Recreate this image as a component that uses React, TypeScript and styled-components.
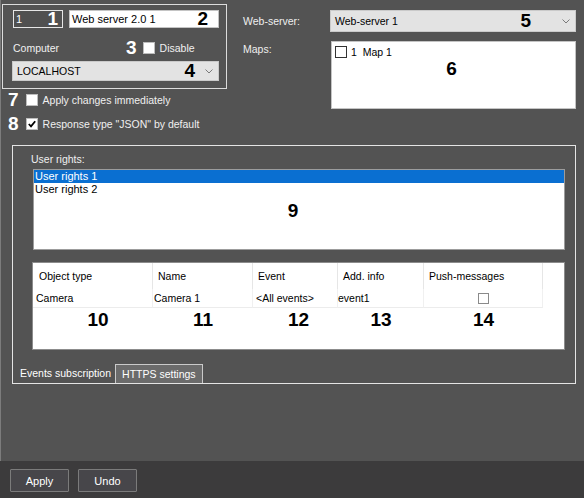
import styled, { createGlobalStyle } from "styled-components";

const GlobalStyle = createGlobalStyle`
  html, body { margin: 0; padding: 0; background: #535353; }
  body { font-family: "Liberation Sans", Arial, sans-serif; font-size: 10.5px; }
  * { box-sizing: border-box; }
`;

const Window = styled.div`
  width: 584px;
  height: 498px;
  display: flex;
  flex-direction: column;
  background: #535353;
  color: #f2f2f2;
  overflow: hidden;
`;

const Main = styled.div`
  height: 461px;
  border-left: 1px solid #7c7c7c;
`;

const Top = styled.div`
  display: flex;
  align-items: flex-start;
`;

const LeftCol = styled.div`
  padding-top: 4px;
  margin-left: 1px;
  width: 225px;
`;

const GroupBox = styled.div`
  width: 225px;
  height: 85px;
  border: 1px solid #dcdcdc;
  padding: 5px 6px 7px 10px;
`;

const FieldRow = styled.div`
  display: flex;
  gap: 6px;
  height: 18px;
`;

const Field = styled.div<{ $dark?: boolean; $w: number; $right: number }>`
  width: ${(p) => p.$w}px;
  height: 18px;
  display: flex;
  align-items: center;
  padding: 0 ${(p) => p.$right}px 0 2px;
  border: 1px solid ${(p) => (p.$dark ? "#e6e6e6" : "#c4c4c4")};
  background: ${(p) => (p.$dark ? "#505050" : "#ffffff")};
  color: ${(p) => (p.$dark ? "#ffffff" : "#000000")};
  font-size: 11px;
`;

const Value = styled.span`
  flex: 1;
  white-space: nowrap;
`;

const Mark = styled.span<{ $dark?: boolean }>`
  font-family: "Liberation Sans", Arial, sans-serif;
  font-weight: bold;
  font-size: 19px;
  line-height: 16px;
  color: ${(p) => (p.$dark ? "#000000" : "#ffffff")};
`;

const InlineRow = styled.div<{ $top: number }>`
  display: flex;
  align-items: center;
  height: 14px;
  margin-top: ${(p) => p.$top}px;
`;

const Label = styled.span<{ $w?: number }>`
  ${(p) => (p.$w ? `width: ${p.$w}px;` : "")}
  white-space: nowrap;
  color: #f0f0f0;
  font-size: 10.5px;
`;

const Box = styled.span<{ $tone?: string; $size?: number }>`
  width: ${(p) => p.$size ?? 12}px;
  height: ${(p) => p.$size ?? 12}px;
  flex: none;
  display: inline-flex;
  align-items: center;
  justify-content: center;
  background: #ffffff;
  border: 1px solid ${(p) => p.$tone ?? "#bdbdbd"};
`;

const Combo = styled.div<{ $w: number; $h: number }>`
  width: ${(p) => p.$w}px;
  height: ${(p) => p.$h}px;
  display: flex;
  align-items: center;
  background: #e3e3e3;
  border: 1px solid #cacaca;
  color: #000;
  padding: 0 5px 0 4px;
  font-size: 10.5px;
`;

const ComboPlace = styled.div`
  margin: 6px 0 0 -1px;
`;

const CheckRows = styled.div`
  padding-left: 6px;
`;

const Gap = styled.span<{ $w: number }>`
  width: ${(p) => p.$w}px;
  flex: none;
`;

const RightCol = styled.div`
  margin-left: 16px;
  padding-top: 10px;
  display: grid;
  grid-template-columns: 87px 246px;
  align-content: start;
  row-gap: 9px;
`;

const FormLabel = styled.div<{ $top?: boolean }>`
  display: flex;
  align-items: ${(p) => (p.$top ? "flex-start" : "center")};
  padding-top: ${(p) => (p.$top ? 2 : 0)}px;
  color: #efefef;
  font-size: 10.5px;
`;

const MapsBox = styled.div`
  height: 68px;
  margin-left: 1px;
  background: #ffffff;
  border: 1px solid #c4c4c4;
  padding: 4px 3px;
  color: #000;
`;

const MapItem = styled.div`
  display: flex;
  align-items: center;
  gap: 4px;
  font-size: 10.5px;
`;

const Centered = styled.div<{ $top: number; $shift?: number }>`
  text-align: center;
  margin-top: ${(p) => p.$top}px;
  padding-right: ${(p) => p.$shift ?? 0}px;
`;

const Group = styled.div`
  margin: 14px 0 0 11px;
  width: 564px;
  height: 239px;
  border: 1px solid #e4e4e4;
  padding-top: 6px;
`;

const SectionLabel = styled.div`
  padding-left: 18px;
  line-height: 14px;
  font-size: 10.5px;
  color: #f0f0f0;
`;

const ListBox = styled.div`
  margin: 3px 0 0 20px;
  width: 532px;
  height: 81px;
  background: #ffffff;
  border: 1px solid #9c9c9c;
  color: #000;
`;

const ListRow = styled.div<{ $selected?: boolean }>`
  height: 13px;
  line-height: 13px;
  padding-left: 1px;
  font-size: 11px;
  background: ${(p) => (p.$selected ? "#0a6fd1" : "transparent")};
  color: ${(p) => (p.$selected ? "#ffffff" : "#000000")};
`;

const Table = styled.div`
  margin: 12px 0 0 19px;
  width: 533px;
  height: 88px;
  background: #ffffff;
  border: 1px solid #8c8c8c;
  color: #000;
  display: grid;
  grid-template-columns: 120px 100px 85px 86px 119px;
  grid-template-rows: 26px 19px 24px;
  align-content: start;
`;

const Head = styled.div<{ $pad: number }>`
  display: flex;
  align-items: center;
  padding-left: ${(p) => p.$pad}px;
  border-right: 1px solid #e6e6e6;
  font-size: 10.5px;
  white-space: nowrap;
`;

const Cell = styled.div<{ $pad: number; $center?: boolean }>`
  display: flex;
  align-items: center;
  justify-content: ${(p) => (p.$center ? "center" : "flex-start")};
  padding-left: ${(p) => p.$pad}px;
  border-right: 1px solid #f0f0f0;
  border-bottom: 1px solid #ececec;
  font-size: 10.5px;
  white-space: nowrap;
`;

const NumCell = styled.div<{ $shift?: number }>`
  display: flex;
  align-items: center;
  justify-content: center;
  padding-left: ${(p) => p.$shift ?? 0}px;
`;

const Tabs = styled.div`
  margin-top: 14px;
  height: 19px;
  display: flex;
  padding-left: 5px;
`;

const Tab = styled.div<{ $active?: boolean }>`
  height: 19px;
  line-height: 18px;
  padding: 0 ${(p) => (p.$active ? "4px 0 2px" : "6px")};
  font-size: 10.5px;
  color: #ffffff;
  background: ${(p) => (p.$active ? "transparent" : "#6b6b6b")};
  border: ${(p) => (p.$active ? "none" : "1px solid #cacaca")};
  border-bottom: none;
`;

const BottomBar = styled.div`
  height: 37px;
  background: #3c3b3c;
  display: flex;
  gap: 9px;
  padding: 8px 0 0 10px;
`;

const Button = styled.button`
  width: 59px;
  height: 23px;
  background: #47464a;
  border: 1px solid #7b7b7b;
  border-radius: 1px;
  color: #ffffff;
  font-family: "Liberation Sans", Arial, sans-serif;
  font-size: 11px;
  padding: 0;
`;

function Chevron({ gap = 9 }: { gap?: number }) {
  return (
    <svg width="8" height="5" viewBox="0 0 8 5" style={{ marginLeft: gap, flex: "none" }}>
      <polyline points="0.5,0.5 4,4 7.5,0.5" fill="none" stroke="#7a7a7a" strokeWidth="1" />
    </svg>
  );
}

function Check({ checked, tone, size }: { checked?: boolean; tone?: string; size?: number }) {
  return (
    <Box $tone={tone} $size={size}>
      {checked && (
        <svg width="8" height="8" viewBox="0 0 8 8">
          <polyline points="0.8,4 3,6.3 7.2,1.2" fill="none" stroke="#000" strokeWidth="1.8" />
        </svg>
      )}
    </Box>
  );
}

export default function App() {
  return (
    <Window>
      <GlobalStyle />
      <Main>
        <Top>
          <LeftCol>
            <GroupBox>
              <FieldRow>
                <Field $dark $w={50} $right={4}>
                  <Value>1</Value>
                  <Mark>1</Mark>
                </Field>
                <Field $w={150} $right={10}>
                  <Value>Web server 2.0 1</Value>
                  <Mark $dark>2</Mark>
                </Field>
              </FieldRow>
              <InlineRow $top={13}>
                <Label $w={113}>Computer</Label>
                <Mark>3</Mark>
                <Gap $w={6} />
                <Check />
                <Gap $w={5} />
                <Label>Disable</Label>
              </InlineRow>
              <ComboPlace>
                <Combo $w={207} $h={20}>
                  <Value>LOCALHOST</Value>
                  <Mark $dark>4</Mark>
                  <Chevron gap={10} />
                </Combo>
              </ComboPlace>
            </GroupBox>
            <CheckRows>
              <InlineRow $top={4}>
                <Mark>7</Mark>
                <Gap $w={7} />
                <Check />
                <Gap $w={5} />
                <Label>Apply changes immediately</Label>
              </InlineRow>
              <InlineRow $top={10}>
                <Mark>8</Mark>
                <Gap $w={7} />
                <Check checked />
                <Gap $w={5} />
                <Label>Response type "JSON" by default</Label>
              </InlineRow>
            </CheckRows>
          </LeftCol>
          <RightCol>
            <FormLabel>Web-server:</FormLabel>
            <Combo $w={246} $h={22}>
              <Value>Web-server 1</Value>
              <Mark $dark>5</Mark>
              <Chevron gap={31} />
            </Combo>
            <FormLabel $top>Maps:</FormLabel>
            <MapsBox>
              <MapItem>
                <Check tone="#333333" />
                <span>1&nbsp;&nbsp;Map 1</span>
              </MapItem>
              <Centered $top={3} $shift={4}>
                <Mark $dark>6</Mark>
              </Centered>
            </MapsBox>
          </RightCol>
        </Top>
        <Group>
          <SectionLabel>User rights:</SectionLabel>
          <ListBox>
            <ListRow $selected>User rights 1</ListRow>
            <ListRow>User rights 2</ListRow>
            <Centered $top={7} $shift={12}>
              <Mark $dark>9</Mark>
            </Centered>
          </ListBox>
          <Table>
            <Head $pad={6}>Object type</Head>
            <Head $pad={5}>Name</Head>
            <Head $pad={5}>Event</Head>
            <Head $pad={5}>Add. info</Head>
            <Head $pad={5}>Push-messages</Head>
            <Cell $pad={3}>Camera</Cell>
            <Cell $pad={1}>Camera 1</Cell>
            <Cell $pad={3}>&lt;All events&gt;</Cell>
            <Cell $pad={0}>event1</Cell>
            <Cell $pad={0} $center>
              <Check size={11} tone="#8a8a8a" />
            </Cell>
            <NumCell $shift={10}>
              <Mark $dark>10</Mark>
            </NumCell>
            <NumCell>
              <Mark $dark>11</Mark>
            </NumCell>
            <NumCell $shift={6}>
              <Mark $dark>12</Mark>
            </NumCell>
            <NumCell>
              <Mark $dark>13</Mark>
            </NumCell>
            <NumCell>
              <Mark $dark>14</Mark>
            </NumCell>
          </Table>
          <Tabs>
            <Tab $active>Events subscription</Tab>
            <Tab>HTTPS settings</Tab>
          </Tabs>
        </Group>
      </Main>
      <BottomBar>
        <Button>Apply</Button>
        <Button>Undo</Button>
      </BottomBar>
    </Window>
  );
}
